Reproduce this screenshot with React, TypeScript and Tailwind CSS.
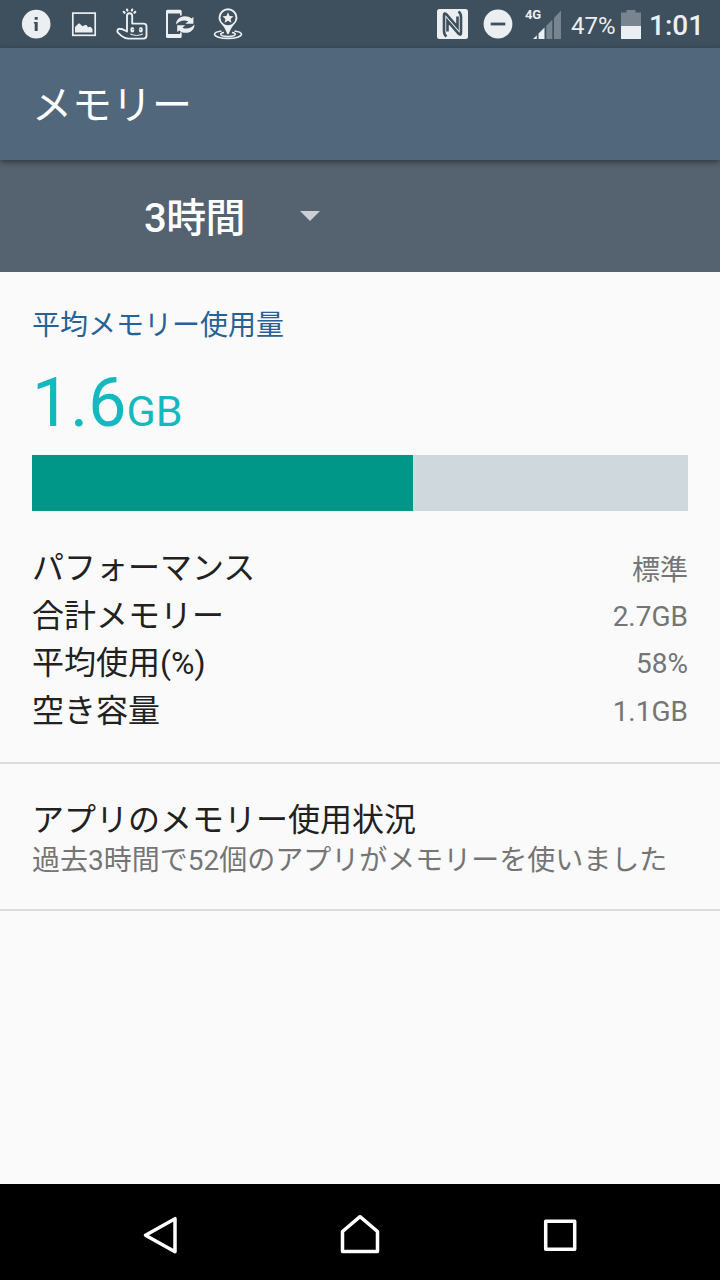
import type { ReactNode } from "react"

const stats = [
  { label: "パフォーマンス", value: "標準", valueClass: "pt-0.5" },
  { label: "合計メモリー", value: "2.7GB", valueClass: "" },
  { label: "平均使用(%)", value: "58%", valueClass: "" },
  { label: "空き容量", value: "1.1GB", valueClass: "" },
]

const StatusIcon = ({ children }: { children: ReactNode }) => (
  <svg width="48" height="48" viewBox="0 0 48 48" fill="none" className="shrink-0">
    {children}
  </svg>
)

const InfoIcon = () => (
  <StatusIcon>
    <circle cx="24.2" cy="24.1" r="14.3" fill="#eceff1" />
    <path d="M22.7 17h3v2.8h-3zM21.9 22h3.8v8.900h-3v-7.300h-.8z" fill="#3e4f5e" />
  </StatusIcon>
)

const PictureIcon = () => (
  <StatusIcon>
    <rect x="12.8" y="13.1" width="22.4" height="22.2" stroke="#eceff1" strokeWidth="1.7" />
    <path d="M15 32.500v-5.500l3.500-3.500h1l3 2.800 2.500-1.300h1.500l1.500 2.300 2.500-.5 2 2.200v3.500z" fill="#eceff1" />
  </StatusIcon>
)

const HandIcon = () => (
  <StatusIcon>
    <path
      d="M19 31.5V15.8a2.6 2.6 0 0 1 5.2 0v7.8h11.300a3 3 0 0 1 3 3v9a3 3 0 0 1-3 3H20.500c-3 0-5-1-7-2.700l-3.300-3a2.300 2.300 0 0 1 1.500-4.100c2.800 0 4.600 1.300 7.300 2.700"
      stroke="#eceff1"
      strokeWidth="1.900"
      strokeLinecap="round"
      strokeLinejoin="round"
    />
    <path
      d="M16.600 12.800l-.9-1M19.400 10.600l-.4-1M23.800 10.600l.4-1M26.400 12.800l.9-1"
      stroke="#eceff1"
      strokeWidth="2.200"
      strokeLinecap="round"
    />
    <ellipse cx="24.300" cy="29.700" rx="2" ry="2.700" fill="#eceff1" />
    <ellipse cx="32.900" cy="29.700" rx="2" ry="2.700" fill="#eceff1" />
    <circle cx="25" cy="29.500" r=".6" fill="#3e4f5e" />
    <circle cx="32.200" cy="29.500" r=".6" fill="#3e4f5e" />
    <path d="M22.800 33.500v1q5.800 2 11.500 0v-1" stroke="#eceff1" strokeWidth="1" />
  </StatusIcon>
)

const PhoneSyncIcon = () => (
  <StatusIcon>
    <path
      d="M11.500 9.700h12.700a1.500 1.500 0 0 1 1.500 1.500v4.300h-1.700v-2H12v20.500h12V32.500h1.700v4a1.500 1.500 0 0 1-1.500 1.500H11.500a1.500 1.500 0 0 1-1.500-1.500V11.200a1.500 1.500 0 0 1 1.500-1.500z"
      fill="#eceff1"
    />
    <path
      d="M20.200 24.500c-.4-4.600 3.500-8.300 8.600-8.300 2.800 0 5 .9 6.600 2.300l2-1.500v6.800h-8l2.800-2.500c-4-1.800-8.800-.8-12 3.200z"
      fill="#eceff1"
    />
    <path
      d="M38.400 24.500c.4 4.600-3.500 8.300-8.600 8.300-2.800 0-5-.9-6.600-2.300l-2 1.500v-6.800h8l-2.800 2.500c4 1.800 8.800.8 12-3.200z"
      fill="#eceff1"
    />
  </StatusIcon>
)

const PinIcon = () => (
  <StatusIcon>
    <path
      d="M17.500 31c-4.300.6-7 1.700-7 3.200 0 2.300 6 4.200 13.500 4.200s13.500-1.900 13.500-4.200c0-1.500-2.700-2.600-7-3.200"
      stroke="#eceff1"
      strokeWidth="1.600"
    />
    <path
      d="M20 32.600c-2 .3-3.300.9-3.300 1.700 0 1.200 3.300 2.100 7.300 2.100s7.300-.9 7.300-2.100c0-.8-1.300-1.400-3.300-1.700"
      stroke="#eceff1"
      strokeWidth="1.500"
    />
    <path
      d="M24 34.500c-.9 0-2-4.500-4.500-8-2.500-3-4.900-5-4.900-8.900a9.400 9.400 0 0 1 18.800 0c0 3.900-2.400 5.900-4.900 8.900-2.500 3.500-3.600 8-4.500 8z"
      fill="#eceff1"
    />
    <circle cx="24" cy="17.700" r="7.500" fill="#3e4f5e" />
    <path
      d="M24 12.300l1.600 3.600 3.900.4-2.900 2.600.8 3.900-3.400-2-3.400 2 .8-3.900-2.900-2.600 3.900-.4z"
      fill="#eceff1"
    />
  </StatusIcon>
)

const NfcIcon = () => (
  <svg width="31" height="30" viewBox="0 0 31 30" fill="none" className="shrink-0">
    <rect width="31" height="30" rx="2.500" fill="#eceff1" />
    <path
      d="M9.500 27.500C7.500 26 7 24.500 7 22V6.500Q7 3 9.500 5.500L20.500 18V7.500M21.500 2.500C23.500 4 24 5.500 24 8v15.500Q24 27 21.500 24.500L10.500 12v10.500"
      stroke="#3e4f5e"
      strokeWidth="2.600"
    />
  </svg>
)

const DoNotDisturbIcon = () => (
  <svg width="30" height="30" viewBox="0 0 30 30" className="shrink-0">
    <circle cx="15" cy="15" r="14.400" fill="#eceff1" />
    <path d="M7.700 13.600h14.600v2.800H7.700z" fill="#3e4f5e" />
  </svg>
)

const SignalIcon = () => (
  <svg width="29" height="29" viewBox="0 0 29 29" className="shrink-0">
    <path d="M0 29l3.800-3.800V29zM5.500 23.500l6-6V29h-6z" fill="#eceff1" />
    <path d="M13.300 15.700l6-6V29h-6zM21 8l7-7.500V29h-7z" fill="#788591" />
  </svg>
)

const BatteryIcon = () => (
  <svg width="20" height="29" viewBox="0 0 20 29" className="shrink-0">
    <path d="M5.500 0h9v2.500H20V16H0V2.500h5.500z" fill="#788591" />
    <path d="M0 16h20v13H0z" fill="#eceff1" />
  </svg>
)

const StatusBar = () => (
  <div className="flex h-12 items-center justify-between bg-[#3e4f5e] pl-3 text-[#eceff1]">
    <div className="flex">
      <InfoIcon />
      <PictureIcon />
      <HandIcon />
      <PhoneSyncIcon />
      <PinIcon />
    </div>
    <div className="flex h-12 w-[283px] items-center">
      <NfcIcon />
      <div className="ml-[15px]">
        <DoNotDisturbIcon />
      </div>
      <div className="relative ml-5">
        <span className="absolute -top-[3px] -left-2 text-[13px] leading-[15px] font-bold tracking-[-0.2px]">4G</span>
        <SignalIcon />
      </div>
      <span className="ml-[9px] w-[50px] pt-[3px] text-[24px] leading-7">47%</span>
      <BatteryIcon />
      <span className="ml-2 pt-[3px] text-[28px] leading-8 font-medium">1:01</span>
    </div>
  </div>
)

const NavigationBar = () => (
  <div className="flex h-24 items-center justify-center gap-[152px] bg-black">
    <svg width="48" height="48" viewBox="0 0 48 48" fill="none" stroke="#fff" strokeWidth="3.500" strokeLinejoin="round">
      <path d="M9.500 27.200L39 10.700v33z" />
    </svg>
    <svg width="48" height="48" viewBox="0 0 48 48" fill="none" stroke="#fff" strokeWidth="3.500" strokeLinejoin="round">
      <path d="M24 8.700L41.500 23.500v20h-35v-20z" />
    </svg>
    <svg width="48" height="48" viewBox="0 0 48 48" fill="none" stroke="#fff" strokeWidth="3.500" strokeLinejoin="round">
      <path d="M9.700 13.200h29v28h-29z" />
    </svg>
  </div>
)

const App = () => {
  return (
    <div className="flex h-[1280px] w-[720px] flex-col overflow-hidden bg-[#fafafa] font-[Roboto,'Noto_Sans_CJK_JP',sans-serif]">
      <StatusBar />
      <header className="z-10 flex h-28 items-center bg-[#51677b] px-8 pt-1 shadow-[0_2px_6px_rgba(0,0,0,0.45)]">
        <h1 className="text-[40px] leading-[56px] text-white">メモリー</h1>
      </header>
      <div className="flex h-28 items-center bg-[#556270] pl-36">
        <span className="w-[156px] pt-[5px] text-[40px] leading-[56px] font-medium tracking-[-0.6px] text-white">
          3時間
        </span>
        <svg width="20" height="10" viewBox="0 0 20 10">
          <path d="M0 0h20L10 10z" fill="#ccd0d4" />
        </svg>
      </div>

      <main className="flex flex-1 flex-col">
        <section className="flex flex-col border-b-2 border-[#dcdcdc] px-8 pt-[34px]">
          <h2 className="text-[28px] leading-10 text-[#266297]">平均メモリー使用量</h2>
          <div className="mt-[17px] flex h-[92px] items-baseline text-[#14b8bf]">
            <span className="text-[68px] leading-[80px]">1.6</span>
            <span className="text-[43px]">GB</span>
          </div>
          <div className="h-14 bg-[#cfd8dc]">
            <div className="h-full w-[58.1%] bg-[#009688]" />
          </div>
          <dl className="mt-[33px] mb-7 flex flex-col">
            {stats.map((stat) => (
              <div key={stat.label} className="flex h-[47.5px] items-start justify-between">
                <dt className="text-[32px] leading-[48px] text-[#212121]">{stat.label}</dt>
                <dd className={`mt-[5px] text-[28px] leading-10 text-[#757575] ${stat.valueClass}`}>{stat.value}</dd>
              </div>
            ))}
          </dl>
        </section>
        <section className="flex h-[147px] flex-col border-b-2 border-[#dcdcdc] px-8 pt-[34px]">
          <h2 className="text-[32px] leading-[44px] text-[#212121]">アプリのメモリー使用状況</h2>
          <p className="text-[28px] leading-[38px] whitespace-nowrap text-[#757575]">
            過去3時間で52個のアプリがメモリーを使いました
          </p>
        </section>
      </main>

      <NavigationBar />
    </div>
  )
}

export default App
